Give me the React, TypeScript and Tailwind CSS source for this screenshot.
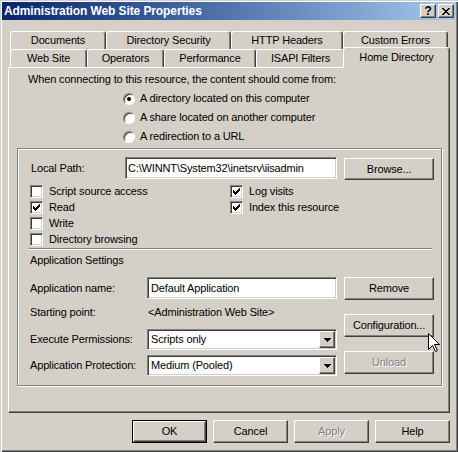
import React from "react";

const raised =
  "bg-[#d4d0c8] border border-t-white border-l-white border-r-[#404040] border-b-[#404040] shadow-[inset_-1px_-1px_0_#808080]";
const sunken =
  "bg-white border border-t-[#808080] border-l-[#808080] border-r-white border-b-white shadow-[inset_1px_1px_0_#404040,inset_-1px_-1px_0_#d4d0c8]";

// tiny pixel glyphs, drawn row by row
function Pixels({ rows }: { rows: string[] }) {
  const w = rows[0].length;
  return (
    <svg width={w} height={rows.length} shapeRendering="crispEdges">
      {rows.map((r, y) =>
        r.split("").map((c, x) => (c === "#" ? <rect key={`${x}-${y}`} x={x} y={y} width="1" height="1" fill="#000" /> : null))
      )}
    </svg>
  );
}

const checkRows = ["......#", ".....##", "#...###", "##.###.", "#####..", ".###...", "..#...."];
const closeRows = ["##....##", ".##..##.", "..####..", "...##...", "..####..", ".##..##.", "##....##"];

function Button({ label, className = "", disabled = false }: { label: string; className?: string; disabled?: boolean }) {
  return (
    <div className={`${raised} ${className} flex items-center justify-center`}>
      <span className={disabled ? "text-[#808080] [text-shadow:1px_1px_0_#ffffff]" : ""}>{label}</span>
    </div>
  );
}

function Check({ checked = false, label }: { checked?: boolean; label: string }) {
  return (
    <div className="flex items-center h-[16px] gap-[6px]">
      <div className={`${sunken} w-[13px] h-[13px] shrink-0 flex items-center justify-center`}>
        {checked && <Pixels rows={checkRows} />}
      </div>
      <span>{label}</span>
    </div>
  );
}

function Radio({ on = false, label }: { on?: boolean; label: string }) {
  return (
    <div className="flex items-center h-[19px] gap-[5px]">
      <div className="w-[12px] h-[12px] rounded-full bg-white border border-t-[#808080] border-l-[#808080] border-r-white border-b-white shadow-[inset_1px_1px_0_#404040] flex items-center justify-center">
        {on && <div className="w-[4px] h-[4px] rounded-full bg-black" />}
      </div>
      <span>{label}</span>
    </div>
  );
}

function Select({ value }: { value: string }) {
  return (
    <div className={`${sunken} w-[190px] h-[21px] flex items-center`}>
      <span className="flex-1 pl-[3px]">{value}</span>
      <div className={`${raised} w-[16px] h-[17px] mr-[1px] flex items-center justify-center`}>
        <svg width="7" height="4" shapeRendering="crispEdges">
          <path d="M0 0h7v1h-1v1h-1v1h-1v1h-1v-1h-1v-1h-1v-1h-1z" fill="#000" />
        </svg>
      </div>
    </div>
  );
}

function Tab({ label, w }: { label: string; w: string }) {
  return (
    <div
      className={`${w} h-[18px] flex items-center justify-center border-t border-l border-r border-t-white border-l-white border-r-[#404040] rounded-t-[3px] shadow-[inset_-1px_0_0_#808080]`}
    >
      {label}
    </div>
  );
}

export default function App() {
  return (
    <div className="relative w-[458px] h-[452px] p-[2px] bg-[#d4d0c8] text-black text-[11px] leading-[13px] tracking-[-0.15px] font-['Liberation_Sans','Arial',sans-serif] shadow-[inset_1px_1px_0_#d4d0c8,inset_2px_2px_0_#ffffff,inset_-1px_-1px_0_#404040,inset_-2px_-2px_0_#808080]">
      {/* title bar */}
      <div className="h-[18px] flex items-center pl-[2px] pr-[2px] bg-linear-to-r from-[#0a246a] to-[#a6caf0]">
        <span className="flex-1 text-white font-bold text-[12px] tracking-[-0.1px]">Administration Web Site Properties</span>
        <div className={`${raised} w-[16px] h-[14px] flex items-center justify-center font-bold text-[12px]`}>?</div>
        <div className={`${raised} w-[16px] h-[14px] ml-[2px] flex items-center justify-center`}>
          <Pixels rows={closeRows} />
        </div>
      </div>

      <div className="ml-[6px] w-[442px] mt-[11px]">
        {/* tabs */}
        <div className="flex pl-[2px] h-[18px]">
          <Tab label="Documents" w="w-[96px]" />
          <Tab label="Directory Security" w="w-[125px]" />
          <Tab label="HTTP Headers" w="w-[112px]" />
          <Tab label="Custom Errors" w="w-[105px]" />
        </div>
        <div className="flex pl-[2px] h-[18px]">
          <Tab label="Web Site" w="w-[77px]" />
          <Tab label="Operators" w="w-[77px]" />
          <Tab label="Performance" w="w-[92px]" />
          <Tab label="ISAPI Filters" w="w-[89px]" />
          <div className="relative z-10 -ml-[2px] -mt-[2px] w-[107px] h-[21px] flex items-center justify-center pb-[1px] bg-[#d4d0c8] border-t border-l border-r border-t-white border-l-white border-r-[#404040] rounded-t-[3px] shadow-[inset_-1px_0_0_#808080]">
            Home Directory
          </div>
        </div>

        {/* page */}
        <div className="h-[346px] border border-t-white border-l-white border-r-[#404040] border-b-[#404040] shadow-[inset_-1px_-1px_0_#808080]">
          <div className="mt-[5px] ml-[19px] h-[13px]">When connecting to this resource, the content should come from:</div>
          <div className="mt-[3px] ml-[114px]">
            <Radio on label="A directory located on this computer" />
            <Radio label="A share located on another computer" />
            <Radio label="A redirection to a URL" />
          </div>

          <div className="mt-[2px] ml-[8px] w-[425px] h-[238px] border border-[#808080] shadow-[inset_1px_1px_0_#ffffff,1px_1px_0_#ffffff]">
            <div className="mt-[8px] flex items-start h-[23px]">
              <div className="ml-[13px] w-[94px] h-[22px] flex items-center">Local Path:</div>
              <div className={`${sunken} w-[212px] h-[22px] flex items-center pl-[2px]`}>C:\WINNT\System32\inetsrv\iisadmin</div>
              <Button label="Browse..." className="ml-[7px] mt-[1px] w-[90px] h-[22px]" />
            </div>

            <div className="mt-[3px] ml-[12px] grid grid-cols-[200px_1fr]">
              <Check label="Script source access" />
              <Check checked label="Log visits" />
              <Check checked label="Read" />
              <Check checked label="Index this resource" />
              <Check label="Write" />
              <div />
              <Check label="Directory browsing" />
              <div />
            </div>

            <div className="mt-[1px] ml-[11px] w-[403px] h-[2px] border-t border-b border-t-[#808080] border-b-white" />

            <div className="mt-[4px] ml-[12px] h-[13px]">Application Settings</div>

            <div className="mt-[10px] flex">
              <div className="ml-[12px] w-[307px]">
                <div className="flex items-center h-[22px]">
                  <span className="w-[117px]">Application name:</span>
                  <div className={`${sunken} w-[190px] h-[22px] flex items-center pl-[3px]`}>Default Application</div>
                </div>
                <div className="flex mt-[7px] h-[13px]">
                  <span className="w-[118px]">Starting point:</span>
                  <span>&lt;Administration Web Site&gt;</span>
                </div>
                <div className="flex items-center mt-[10px] h-[21px]">
                  <span className="w-[117px]">Execute Permissions:</span>
                  <Select value="Scripts only" />
                </div>
                <div className="flex items-center mt-[5px] h-[21px]">
                  <span className="w-[117px]">Application Protection:</span>
                  <Select value="Medium (Pooled)" />
                </div>
              </div>
              <div className="ml-[7px] w-[90px]">
                <Button label="Remove" className="h-[23px]" />
                <Button label="Configuration..." className="mt-[14px] h-[23px]" />
                <Button label="Unload" disabled className="mt-[14px] h-[23px]" />
              </div>
            </div>
          </div>
        </div>

        {/* dialog buttons */}
        <div className="mt-[7px] flex justify-end gap-[6px]">
          <div className="w-[75px] h-[23px] border border-black">
            <div className="h-full flex items-center justify-center border border-t-white border-l-white border-r-[#404040] border-b-[#404040] shadow-[inset_-1px_-1px_0_#808080]">
              OK
            </div>
          </div>
          <Button label="Cancel" className="w-[75px] h-[23px]" />
          <Button label="Apply" disabled className="w-[75px] h-[23px]" />
          <Button label="Help" className="w-[75px] h-[23px]" />
        </div>
      </div>

      {/* mouse pointer */}
      <svg className="absolute left-[428px] top-[333px]" width="13" height="20" viewBox="0 0 13 20">
        <path d="M0.5 0.5V16.5L4.5 12.5L7.5 18.5L9.5 17.5L6.5 11.5H11.5Z" fill="#fff" stroke="#000" strokeWidth="1" strokeLinejoin="miter" />
      </svg>
    </div>
  );
}
